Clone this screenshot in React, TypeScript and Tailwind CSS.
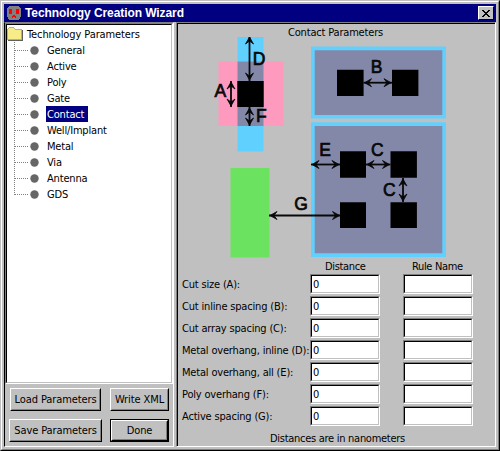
import type { ReactNode } from "react";

const items = ["General", "Active", "Poly", "Gate", "Contact", "Well/Implant", "Metal", "Via", "Antenna", "GDS"];

const fields = [
  "Cut size (A):",
  "Cut inline spacing (B):",
  "Cut array spacing (C):",
  "Metal overhang, inline (D):",
  "Metal overhang, all (E):",
  "Poly overhang (F):",
  "Active spacing (G):",
];

function AppIcon() {
  return (
    <svg width="16" height="16" viewBox="0 0 16 16" shapeRendering="crispEdges">
      <path d="M3 1h10v1h1v1h1v9h-1v2h-1v1h-10v-1h-1v-2h-1v-9h1v-1h1z" fill="#808080" />
      <path d="M3 4h3v5h-3zM10 4h3v5h-3zM7 10h2v1h1v2h-1v-1h-2v1h-1v-2h1z" fill="#f00" />
    </svg>
  );
}

function Folder() {
  return (
    <svg className="mt-px" width="16" height="14" viewBox="0 0 16 14" shapeRendering="crispEdges">
      <path d="M0 2h1v-1h1v-1h5v1h1v1h7v11h-15z" fill="#b4b47c" />
      <path d="M1 2h1v-1h5v1h1v1h6v9h-13z" fill="#f8ec88" />
      <path d="M15 3h1v11h-15v-1h14z" fill="#606060" />
    </svg>
  );
}

function Sunken({ className, children }: { className: string; children?: ReactNode }) {
  return (
    <div className={`border border-t-[#808080] border-l-[#808080] border-r-white border-b-white ${className}`}>
      <div className="flex h-full items-center border border-t-black border-l-black border-r-[#c0c0c0] border-b-[#c0c0c0] bg-white pt-[2px] pl-px">
        {children}
      </div>
    </div>
  );
}

function Button({ className, children }: { className: string; children: ReactNode }) {
  return (
    <button className={`border border-t-white border-l-white border-r-black border-b-black ${className}`}>
      <span className="flex h-full items-center justify-center border border-t-[#c0c0c0] border-l-[#c0c0c0] border-r-[#808080] border-b-[#808080]">
        {children}
      </span>
    </button>
  );
}

function Arrow({ x1, y1, x2, y2 }: { x1: number; y1: number; x2: number; y2: number }) {
  const vertical = x1 === x2;
  const heads = vertical
    ? `M${x1 - 4} ${y1 + 8}L${x1} ${y1 + 1}L${x1 + 4} ${y1 + 8}L${x1} ${y1 + 5}ZM${x1 - 4} ${y2 - 8}L${x1} ${y2 - 1}L${x1 + 4} ${y2 - 8}L${x1} ${y2 - 5}Z`
    : `M${x1 + 8} ${y1 - 4}L${x1 + 1} ${y1}L${x1 + 8} ${y1 + 4}L${x1 + 5} ${y1}ZM${x2 - 8} ${y1 - 4}L${x2 - 1} ${y1}L${x2 - 8} ${y1 + 4}L${x2 - 5} ${y1}Z`;
  return (
    <g stroke="#080808">
      <path d={`M${x1} ${y1}L${x2} ${y2}`} strokeWidth="1.8" />
      <path d={heads} fill="#080808" strokeWidth="0.8" />
    </g>
  );
}

function Diagram() {
  return (
    <svg className="block" width="238" height="221" viewBox="208 37 238 221">
      <path d="M237.5 37h26v114.5h-26z" fill="#60d0ff" />
      <path d="M218.5 61.5h65v64.5h-65z" fill="#ff9abf" />
      <path d="M237.5 61.5h26v64.5h-26z" fill="#8488a8" />
      <path d="M230.5 168h39v89.5h-39z" fill="#6be360" />
      <path d="M311 46.5h135v72h-135zM311 122.3h135v134.7h-135z" fill="#60d0ff" />
      <path d="M314.7 50.3h127.6v64.7h-127.6zM314.7 126h127.6v127.3h-127.6z" fill="#8488a8" />
      <path
        d="M237.3 81h26.4v26h-26.4zM337 69.7h26.6v26.3h-26.6zM392 69.7h26.4v26.3h-26.4zM340 151.3h26v26.4h-26zM390.5 151.3h26.4v26.4h-26.4zM340 202.3h26v25.7h-26zM390.5 202.3h26.4v25.7h-26.4z"
        fill="#000"
      />
      <Arrow x1={249.5} y1={36} x2={249.5} y2={81} />
      <Arrow x1={231} y1={81} x2={231} y2={107} />
      <Arrow x1={249.5} y1={107} x2={249.5} y2={126} />
      <Arrow x1={363.5} y1={82.7} x2={392} y2={82.7} />
      <Arrow x1={311} y1={164.5} x2={340} y2={164.5} />
      <Arrow x1={366} y1={164.5} x2={390.5} y2={164.5} />
      <Arrow x1={403} y1={178} x2={403} y2={202} />
      <Arrow x1={269} y1={215.5} x2={340.5} y2={215.5} />
      <g className="font-['Liberation_Sans',Arial,sans-serif] text-[17.5px] tracking-normal" fill="#080808" stroke="#080808" strokeWidth="0.7">
        <text x="252.7" y="64.7">D</text>
        <text x="214.5" y="96.7">A</text>
        <text x="256" y="122">F</text>
        <text x="370.8" y="73">B</text>
        <text x="319.3" y="155.5">E</text>
        <text x="371" y="155.5">C</text>
        <text x="383" y="196">C</text>
        <text x="294.2" y="210">G</text>
      </g>
    </svg>
  );
}

export default function App() {
  return (
    <div className="h-[451px] w-[500px] border border-t-[#c0c0c0] border-l-[#c0c0c0] border-r-black border-b-black bg-[#c0c0c0] font-['DejaVu_Sans_Condensed','DejaVu_Sans',sans-serif] text-[11px] leading-[16px] tracking-[-0.18px] whitespace-nowrap text-black">
      <div className="flex h-full flex-col border border-t-white border-l-white border-r-[#808080] border-b-[#808080] pt-[2px] pl-[2px]">
        <div className="flex h-[18px] w-[492px] shrink-0 items-center bg-[#000080] pr-[2px] pl-[2px]">
          <AppIcon />
          <span className="ml-[3px] flex-1 font-['Liberation_Sans',Arial,sans-serif] text-[12px] font-bold tracking-[-0.08px] text-white">
            Technology Creation Wizard
          </span>
          <button className="flex h-[14px] w-[16px] items-center justify-center border border-t-white border-l-white border-r-black border-b-black bg-[#c0c0c0]">
            <svg width="8" height="7" viewBox="0 0 8 7" shapeRendering="crispEdges">
              <path d="M0 0h2v1h1v1h2v-1h1v-1h2v1h-1v1h-1v1h-1v1h1v1h1v1h1v1h-2v-1h-1v-1h-2v1h-1v1h-2v-1h1v-1h1v-1h1v-1h-1v-1h-1v-1h-1z" fill="#000" />
            </svg>
          </button>
        </div>
        <div className="flex h-[425px] gap-[2px]">
          <div className="flex w-[170px] flex-col border border-t-[#808080] border-l-black border-r-white border-b-white">
            <div className="h-[361px] border border-t-[#808080] border-l-[#808080] border-r-white border-b-white">
              <div className="h-full border border-t-black border-l-black border-r-[#c0c0c0] border-b-[#c0c0c0] bg-white pt-px leading-[18px]">
                <div className="flex h-4 items-start gap-1 tracking-[-0.1px]">
                  <Folder />
                  <span>Technology Parameters</span>
                </div>
                {items.map((item, i) => (
                  <div key={item} className="flex h-4">
                    <svg width="39" height="16" viewBox="0 0 39 16">
                      <path d={i === items.length - 1 ? "M7.5 0V9" : "M7.5 0V16"} stroke="#808080" strokeDasharray="1 1" />
                      <path d="M8 8.5H22" stroke="#808080" strokeDasharray="1 1" />
                      <circle cx="27.5" cy="8.5" r="4.2" fill="#666" />
                    </svg>
                    <span className={item === "Contact" ? "w-[42px] bg-[#000080] pl-px text-white" : "pl-px"}>{item}</span>
                  </div>
                ))}
              </div>
            </div>
            <div className="flex flex-col gap-2 pt-1 tracking-[-0.1px]">
              <div className="flex pl-[5px]">
                <Button className="h-[23px] w-[91px]">Load Parameters</Button>
                <Button className="ml-[9px] h-[23px] w-[59px]">Write XML</Button>
              </div>
              <div className="flex pl-1">
                <Button className="h-[23px] w-[93px]">Save Parameters</Button>
                <div className="ml-2 border border-black">
                  <Button className="block h-[21px] w-[57px]">Done</Button>
                </div>
              </div>
            </div>
          </div>
          <div className="w-[320px] border border-t-[#808080] border-l-[#808080] border-r-white border-b-white">
            <div className="flex h-full flex-col border-t border-l border-black">
              <div className="h-[13px] pl-[110px] leading-[18px]">Contact Parameters</div>
              <div className="pl-[30px]">
                <Diagram />
              </div>
              <div className="flex h-4 leading-[18px] tracking-[-0.35px]">
                <span className="ml-[147px] w-[87px]">Distance</span>
                <span>Rule Name</span>
              </div>
              <div className="flex flex-col gap-[2px]">
                {fields.map((label) => (
                  <div key={label} className="flex h-5 items-center">
                    <span className="w-[132px] pt-[2px] pl-1">{label}</span>
                    <Sunken className="h-5 w-[70px]">0</Sunken>
                    <Sunken className="ml-[23px] h-5 w-[70px]" />
                  </div>
                ))}
              </div>
              <div className="pt-1 pl-[92px] leading-[18px] tracking-[-0.28px]">Distances are in nanometers</div>
            </div>
          </div>
        </div>
      </div>
    </div>
  );
}
